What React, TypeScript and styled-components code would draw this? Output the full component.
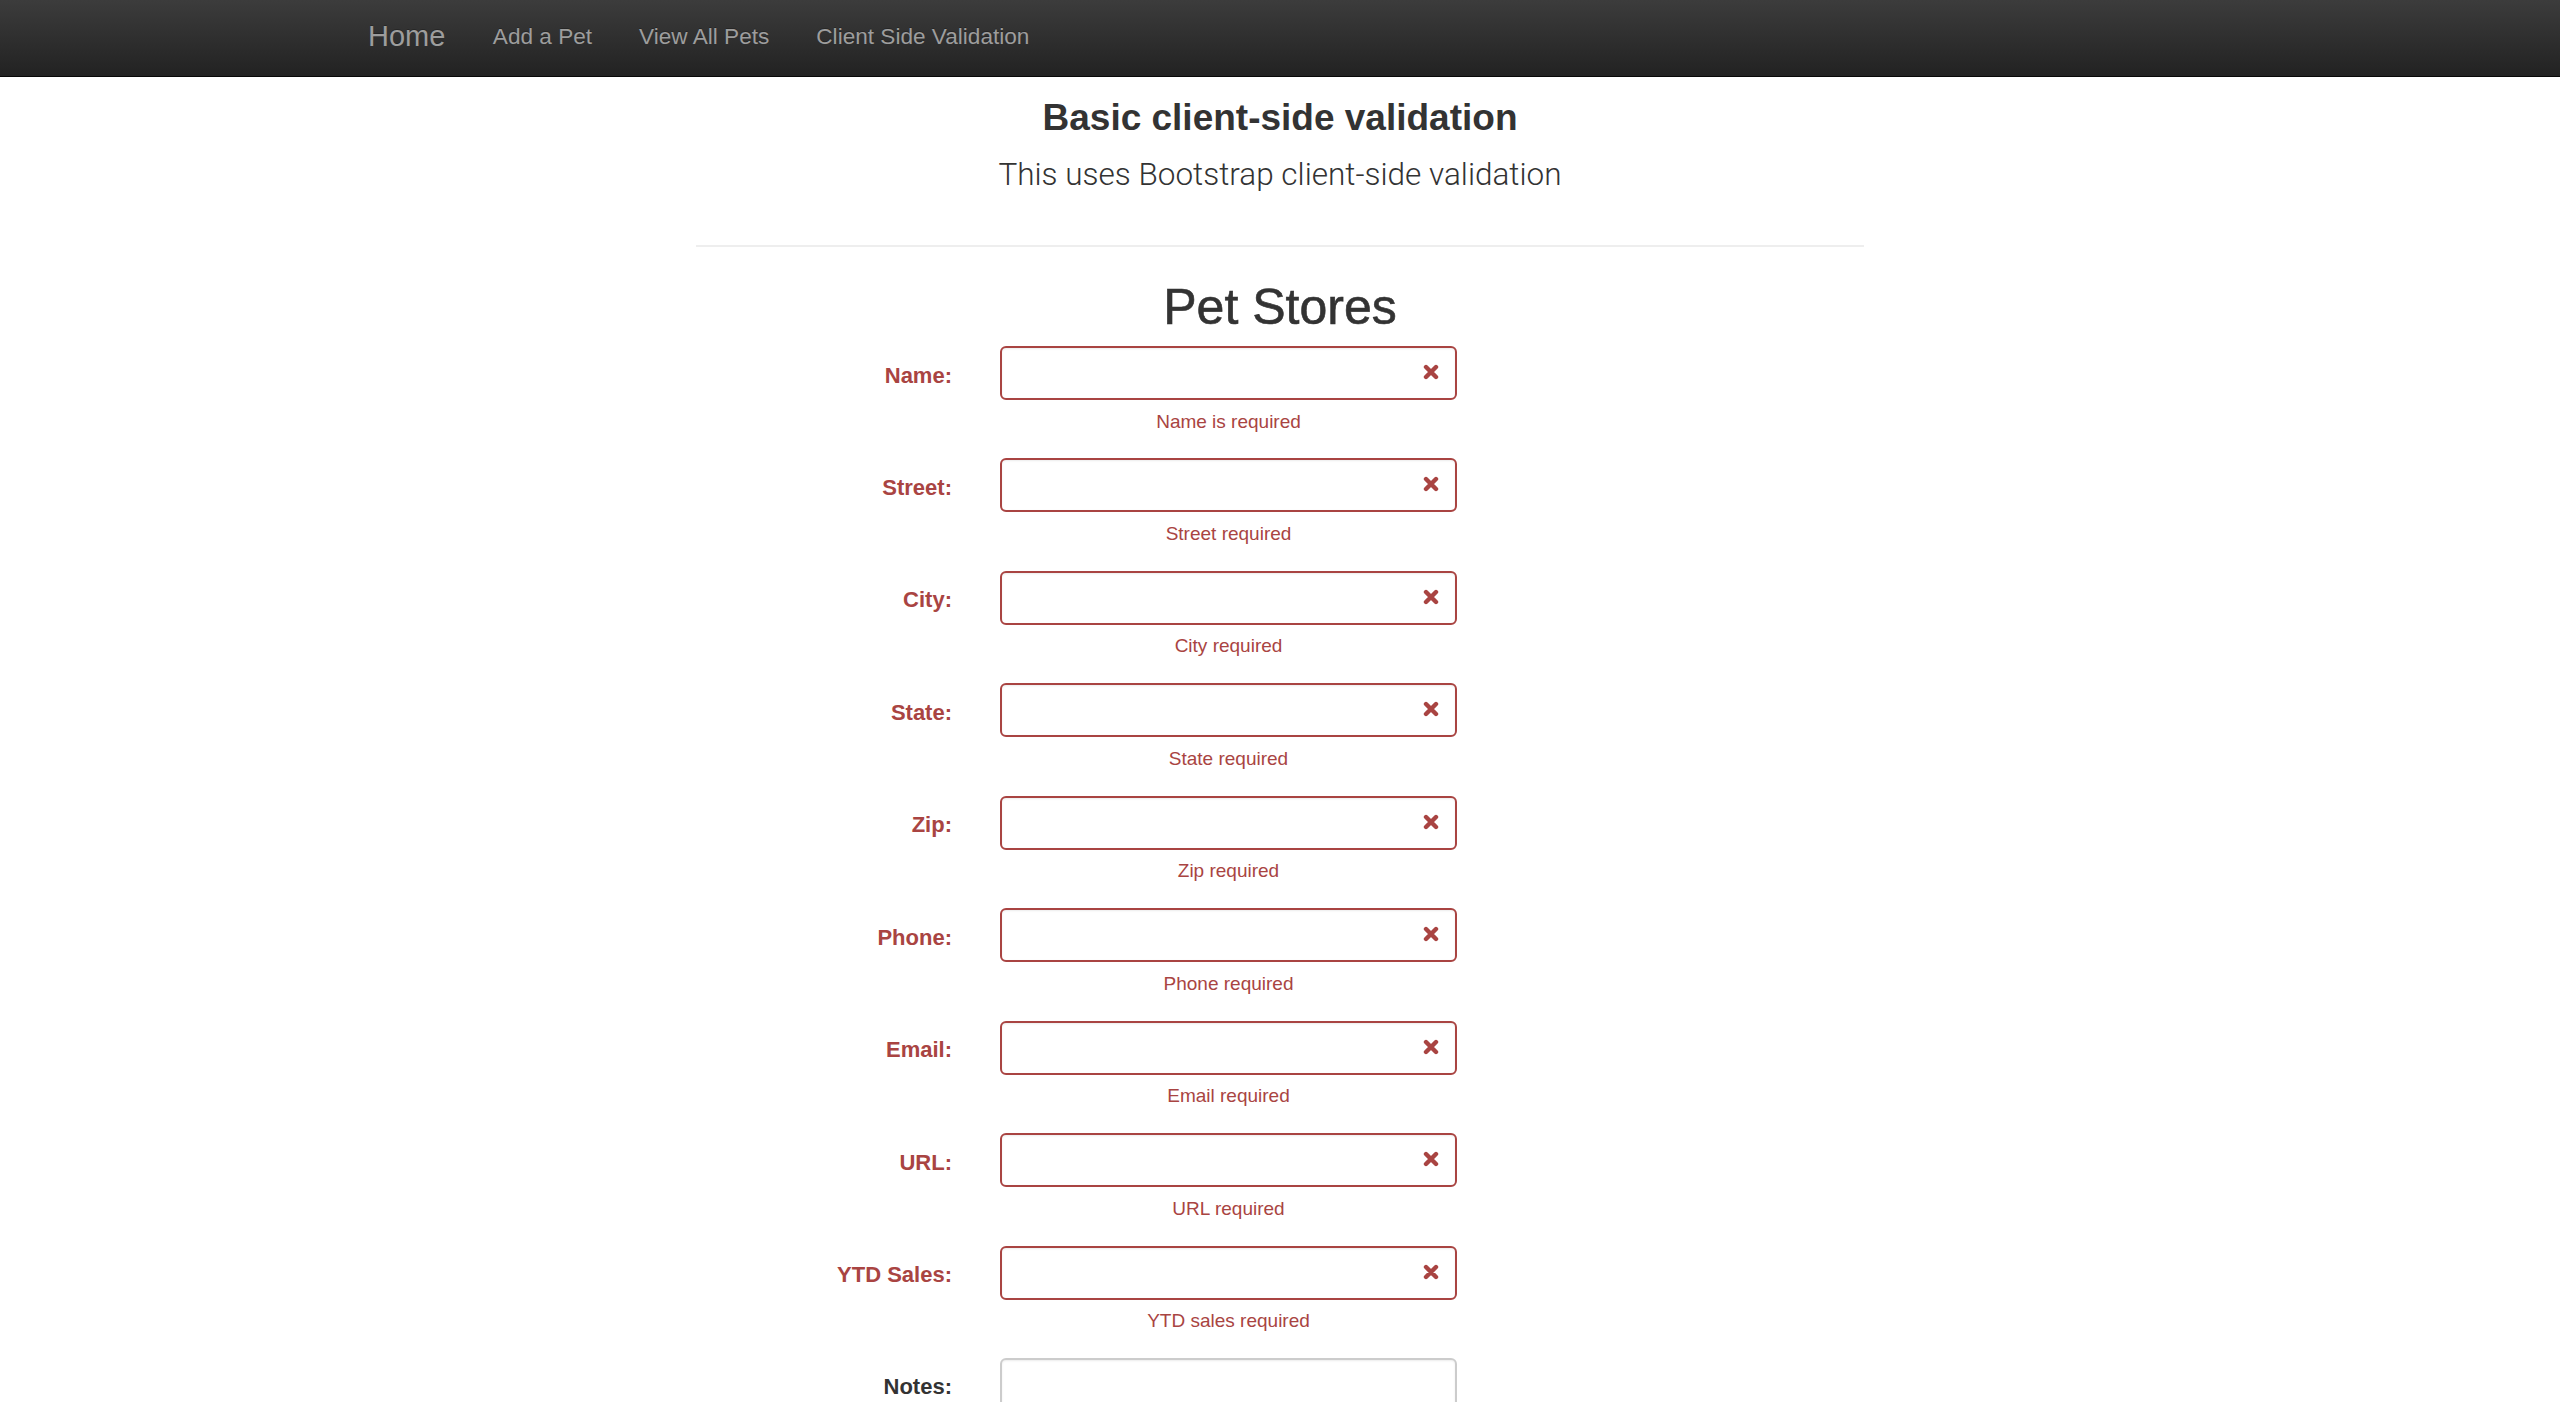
import React from "react";
import styled, { createGlobalStyle } from "styled-components";

const GlobalStyle = createGlobalStyle`
  * { box-sizing: border-box; }
  html, body { margin: 0; padding: 0; background: #ffffff; }
  body {
    font-family: "Liberation Sans", Arial, Helvetica, sans-serif;
    color: #333333;
  }
`;

const Navbar = styled.nav`
  height: 77px;
  background: linear-gradient(to bottom, #3c3c3c 0%, #222222 100%);
  border-bottom: 1px solid #080808;
  display: flex;
  align-items: center;
  padding-left: 344px;
  padding-bottom: 3px;
`;

const NavBrand = styled.a`
  font-size: 29px;
  color: #9d9d9d;
  padding: 0 24px;
  text-decoration: none;
  text-shadow: 0 -1px 0 rgba(0, 0, 0, 0.25);
`;

const NavLink = styled.a`
  font-size: 22.6px;
  color: #9d9d9d;
  padding: 0 23.5px;
  text-decoration: none;
  text-shadow: 0 -1px 0 rgba(0, 0, 0, 0.25);
`;

const Main = styled.main`
  width: 1168px;
  margin: 0 auto;
`;

const Header = styled.header`
  text-align: center;
`;

const Title = styled.h3`
  margin: 21px 0 0;
  font-size: 37px;
  line-height: 40px;
  font-weight: 700;
  color: #333333;
`;

const Lead = styled.p`
  margin: 14.5px 0 0;
  font-family: Roboto, "Liberation Sans", sans-serif;
  font-weight: 300;
  font-size: 31.5px;
  line-height: 44px;
  color: #333333;
`;

const Divider = styled.hr`
  margin: 48.5px 0 0;
  border: 0;
  border-top: 2px solid #eeeeee;
`;

const Heading = styled.h1`
  margin: 32px 0 0;
  text-align: center;
  font-size: 50px;
  line-height: 56px;
  font-weight: 400;
  color: #333333;
  -webkit-text-stroke: 0.6px #333333;
`;

const Form = styled.form`
  margin-top: 11px;
  display: flex;
  flex-direction: column;
`;

const Row = styled.div`
  display: grid;
  grid-template-columns: 256px 457px;
  column-gap: 48px;
  margin-bottom: 22.94px;
`;

const Label = styled.label<{ $error?: boolean }>`
  text-align: right;
  font-weight: 700;
  font-size: 22px;
  line-height: 30px;
  padding-top: 14.5px;
  color: ${(p) => (p.$error ? "#a94442" : "#333333")};
`;

const Field = styled.div`
  display: flex;
  flex-direction: column;
`;

const InputWrap = styled.div`
  position: relative;
`;

const Input = styled.input<{ $error?: boolean }>`
  display: block;
  width: 100%;
  height: 54px;
  padding: 0 48px 0 18px;
  font-size: 21px;
  border: 2px solid ${(p) => (p.$error ? "#a94442" : "#cccccc")};
  border-radius: 6px;
  box-shadow: inset 0 1px 2px rgba(0, 0, 0, 0.075);
  background: #ffffff;
  outline: none;
`;

const TextArea = styled.textarea`
  display: block;
  width: 100%;
  height: 140px;
  padding: 10px 18px;
  font-size: 21px;
  border: 2px solid #cccccc;
  border-radius: 6px;
  box-shadow: inset 0 1px 2px rgba(0, 0, 0, 0.075);
  resize: none;
  outline: none;
`;

const FeedbackIcon = styled.svg`
  position: absolute;
  right: 18px;
  top: 18px;
  width: 16px;
  height: 16px;
  pointer-events: none;
`;

const HelpText = styled.span`
  display: block;
  margin-top: 7.5px;
  line-height: 28px;
  font-size: 19px;
  text-align: center;
  color: #a94442;
`;

const RemoveIcon = () => (
  <FeedbackIcon viewBox="0 0 16 16" aria-hidden="true">
    <path
      d="M3 3 L13 13 M13 3 L3 13"
      stroke="#a94442"
      strokeWidth="4.4"
      strokeLinecap="round"
      fill="none"
    />
  </FeedbackIcon>
);

const fields = [
  { label: "Name:", help: "Name is required" },
  { label: "Street:", help: "Street required" },
  { label: "City:", help: "City required" },
  { label: "State:", help: "State required" },
  { label: "Zip:", help: "Zip required" },
  { label: "Phone:", help: "Phone required" },
  { label: "Email:", help: "Email required" },
  { label: "URL:", help: "URL required" },
  { label: "YTD Sales:", help: "YTD sales required" },
];

export default function App() {
  return (
    <>
      <GlobalStyle />
      <Navbar>
        <NavBrand href="#">Home</NavBrand>
        <NavLink href="#">Add a Pet</NavLink>
        <NavLink href="#">View All Pets</NavLink>
        <NavLink href="#">Client Side Validation</NavLink>
      </Navbar>
      <Main>
        <Header>
          <Title>Basic client-side validation</Title>
          <Lead>This uses Bootstrap client-side validation</Lead>
        </Header>
        <Divider />
        <Heading>Pet Stores</Heading>
        <Form noValidate onSubmit={(e) => e.preventDefault()}>
          {fields.map((f) => (
            <Row key={f.label}>
              <Label $error>{f.label}</Label>
              <Field>
                <InputWrap>
                  <Input $error type="text" />
                  <RemoveIcon />
                </InputWrap>
                <HelpText>{f.help}</HelpText>
              </Field>
            </Row>
          ))}
          <Row>
            <Label>Notes:</Label>
            <Field>
              <TextArea />
            </Field>
          </Row>
        </Form>
      </Main>
    </>
  );
}
